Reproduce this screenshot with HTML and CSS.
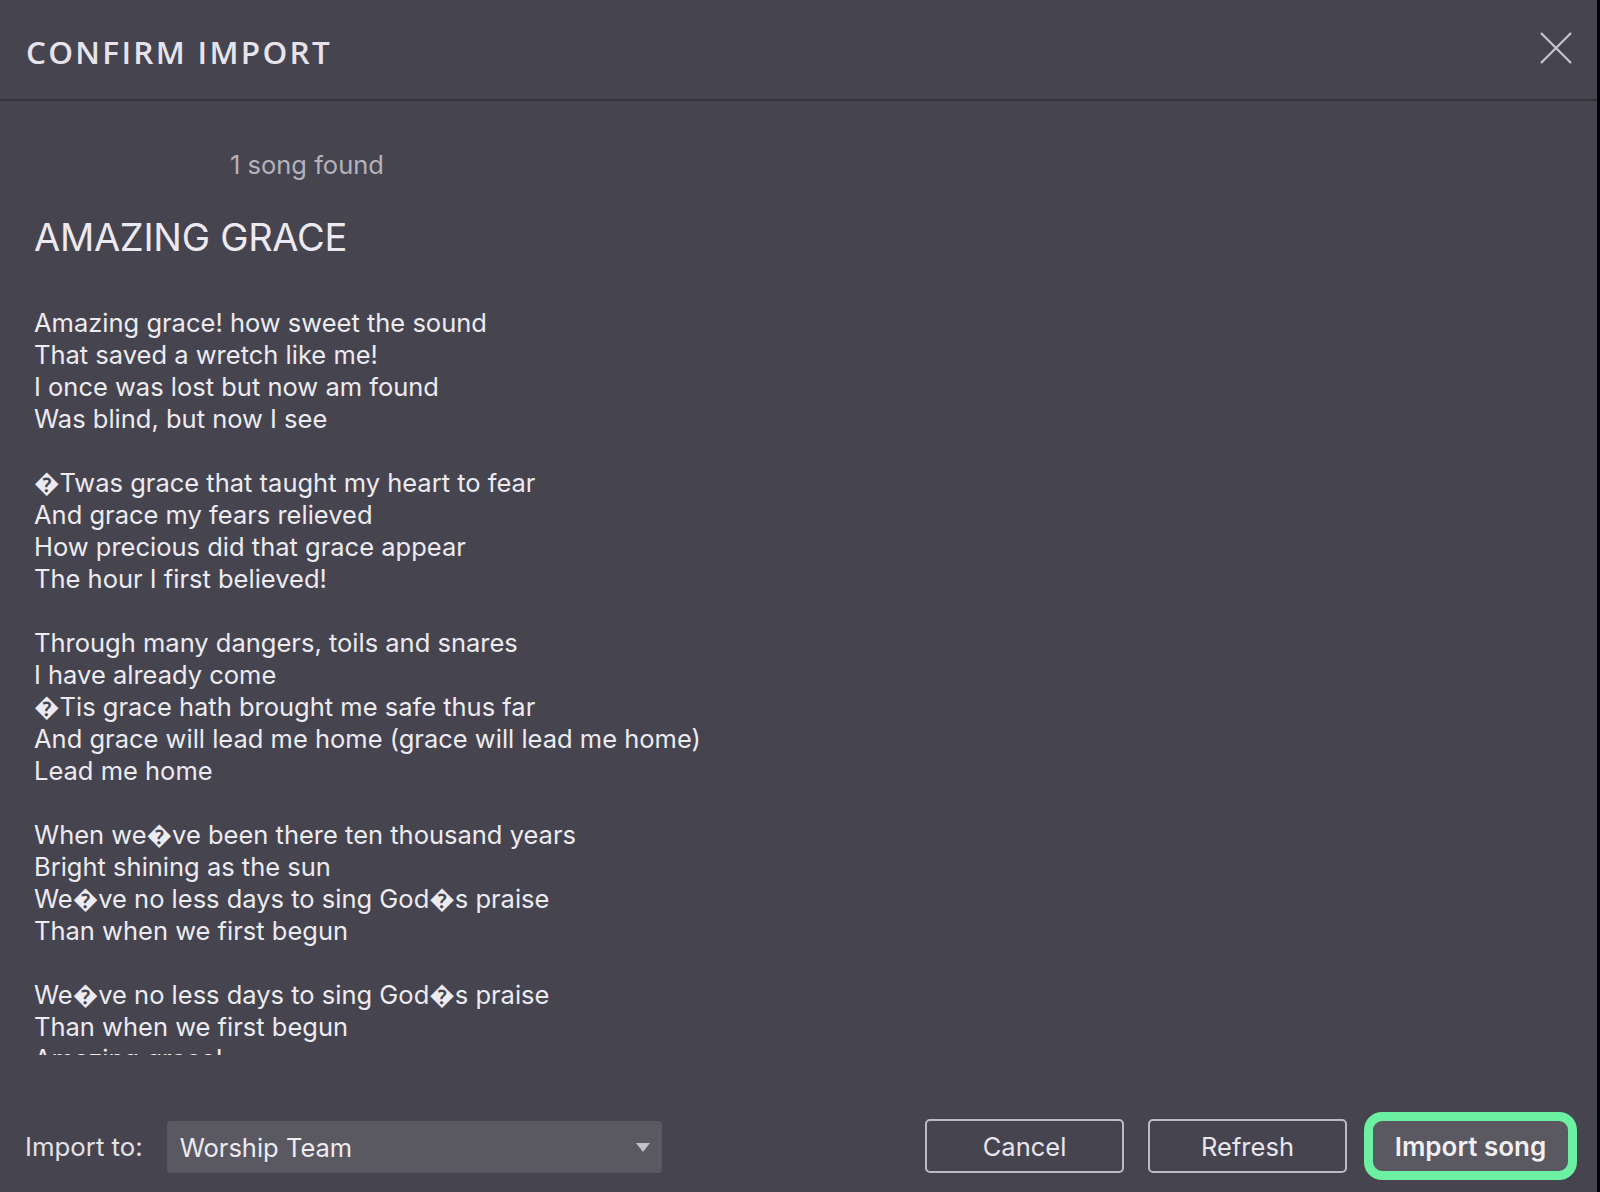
FILE: index.html
```html
<!DOCTYPE html>
<html lang="en">
<head>
<meta charset="utf-8">
<title>Confirm import</title>
<link rel="stylesheet" href="styles.css">
</head>
<body>
<div class="dialog">
  <header class="header">
    <h2 class="title">CONFIRM IMPORT</h2>
    <button class="close" aria-label="Close">
      <svg width="32" height="32" viewBox="0 0 32 32"><path d="M1 1 L31 31 M31 1 L1 31" stroke="#c9c7ce" stroke-width="2.2" fill="none"/></svg>
    </button>
  </header>
  <main class="body">
    <div class="count">1 song found</div>
    <h1 class="song">AMAZING GRACE</h1>
    <div class="lyrics">Amazing grace! how sweet the sound
That saved a wretch like me!
I once was lost but now am found
Was blind, but now I see

&#xFFFD;Twas grace that taught my heart to fear
And grace my fears relieved
How precious did that grace appear
The hour I first believed!

Through many dangers, toils and snares
I have already come
&#xFFFD;Tis grace hath brought me safe thus far
And grace will lead me home (grace will lead me home)
Lead me home

When we&#xFFFD;ve been there ten thousand years
Bright shining as the sun
We&#xFFFD;ve no less days to sing God&#xFFFD;s praise
Than when we first begun

We&#xFFFD;ve no less days to sing God&#xFFFD;s praise
Than when we first begun
Amazing grace!</div>
  </main>
  <footer class="footer">
    <label class="label">Import to:</label>
    <div class="select">
      <span class="select-value">Worship Team</span>
      <span class="caret"></span>
    </div>
    <div class="spacer"></div>
    <button class="btn">Cancel</button>
    <button class="btn">Refresh</button>
    <button class="btn btn-primary">Import song</button>
  </footer>
</div>
</body>
</html>
```

FILE: styles.css
```css
html, body {
  margin: 0;
  padding: 0;
  background: #000;
}
body {
  font-family: Inter, "Noto Sans", "DejaVu Sans", sans-serif;
  color: #ebe9ef;
}
.dialog {
  width: 1597px;
  height: 1192px;
  background: #46444f;
  display: flex;
  flex-direction: column;
  overflow: hidden;
}
.header {
  height: 99px;
  border-bottom: 2px solid #34323b;
  display: flex;
  align-items: center;
  padding: 0 25px 0 26px;
  box-sizing: content-box;
}
.title {
  margin: 4px 0 0 0;
  font-family: "Open Sans", sans-serif;
  font-weight: 600;
  font-size: 31.5px;
  letter-spacing: 2.3px;
  color: #e6e4ea;
  flex: 1;
}
.close {
  background: none;
  border: none;
  padding: 0;
  width: 32px;
  height: 32px;
  margin-top: -4px;
  display: flex;
}
.body {
  flex: 1;
  overflow: hidden;
  padding: 48px 34px 0 34px;
}
.count {
  margin-left: 196px;
  font-size: 25.5px;
  line-height: 32px;
  color: #b4b2ba;
}
.song {
  margin: 32px 0 0 0;
  font-size: 38px;
  line-height: 48px;
  font-weight: 400;
  color: #eceaf0;
  letter-spacing: -0.3px;
}
.lyrics {
  margin-top: 46px;
  white-space: pre-line;
  font-size: 25.5px;
  line-height: 32px;
  color: #ecebf0;
}
.footer {
  height: 137px;
  box-sizing: border-box;
  display: flex;
  align-items: flex-end;
  padding: 0 27px 19px 25px;
}
.label {
  font-size: 25.8px;
  line-height: 52px;
  color: #e3e1e7;
  margin-right: 24px;
}
.select {
  width: 495px;
  height: 52px;
  background: #5a5961;
  border-radius: 4px;
  display: flex;
  align-items: center;
  padding: 0 12px 0 13px;
  box-sizing: border-box;
}
.select-value {
  flex: 1;
  font-size: 25.5px;
  color: #ecebf0;
}
.caret {
  width: 0;
  height: 0;
  border-left: 7px solid transparent;
  border-right: 7px solid transparent;
  border-top: 9px solid #c3c1c8;
}
.spacer {
  flex: 1;
}
.btn {
  width: 199px;
  height: 54px;
  margin-left: 24px;
  background: transparent;
  border: 2px solid #bdbbc2;
  border-radius: 5px;
  font-family: Inter, "Noto Sans", sans-serif;
  font-size: 25.5px;
  color: #e8e6ec;
  padding: 0;
}
.btn-primary {
  background: #5a5961;
  border-color: #6cf0a2;
  border-radius: 11px;
  box-shadow: 0 0 0 7px #6cf0a2;
  font-weight: 600;
  font-size: 26px;
  color: #f0eff3;
}
```
